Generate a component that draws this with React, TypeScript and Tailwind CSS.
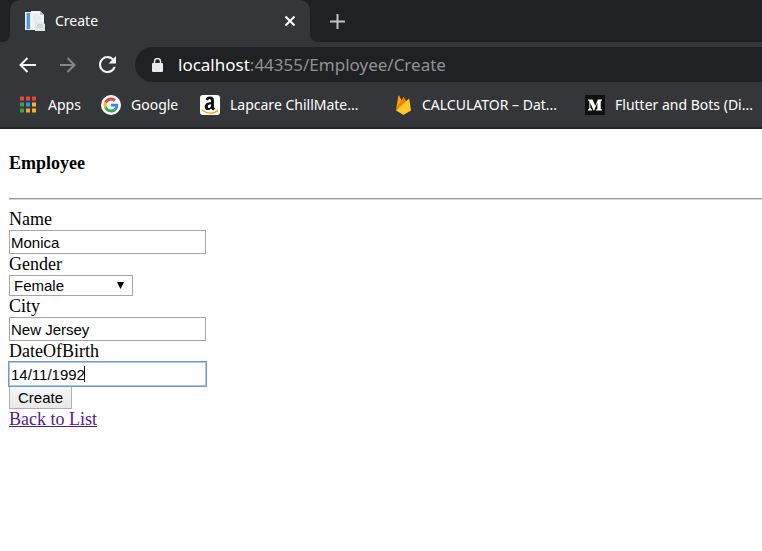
import type { ReactNode } from "react";

const UI_FONT = "font-['Segoe_UI','Noto_Sans',sans-serif]";

function PageIcon() {
  return (
    <svg width="20" height="20" viewBox="0 0 20 20" aria-hidden="true">
      <rect x="0" y="1" width="16" height="18" fill="#e6ebf0" />
      <rect x="1" y="2" width="4" height="16" fill="#4f9bcf" />
      <rect x="1" y="2" width="1" height="16" fill="#a9cfe8" />
      <path d="M6 0h9l4 4v14H6z" fill="#f2f2f2" />
      <path d="M15 0v4h4z" fill="#c4c8cc" />
      <path d="M8 4h6M8 6h8M8 8h8M8 10h5" stroke="#dfe2e5" />
      <path d="M10 11h7l3 2v7H10z" fill="#e3e5e8" />
      <path d="M12 14h6M12 16h6" stroke="#c2c6ca" />
    </svg>
  );
}

function AppsIcon() {
  const rows = [
    ["#e8453c", "#e8453c", "#e8453c"],
    ["#35a554", "#2e8ef0", "#f5b52c"],
    ["#35a554", "#f5a62c", "#f5b52c"],
  ];
  return (
    <svg width="16" height="17" viewBox="0 0 16 17" aria-hidden="true">
      {rows.map((row, y) =>
        row.map((fill, x) => <rect key={`${x}-${y}`} x={x * 6} y={y * 6 + 0.5} width="4" height="4" fill={fill} />),
      )}
    </svg>
  );
}

function GoogleIcon() {
  return (
    <svg width="20" height="20" viewBox="0 0 20 20" aria-hidden="true">
      <circle cx="10" cy="10" r="10" fill="#fff" />
      <g transform="translate(2.5 2.5) scale(.3125)">
        <path fill="#EA4335" d="M24 9.5c3.54 0 6.71 1.22 9.21 3.6l6.85-6.85C35.9 2.38 30.47 0 24 0 14.62 0 6.51 5.38 2.56 13.22l7.98 6.19C12.43 13.72 17.74 9.5 24 9.5z" />
        <path fill="#4285F4" d="M46.98 24.55c0-1.57-.15-3.09-.38-4.55H24v9.02h12.94c-.58 2.96-2.26 5.48-4.78 7.18l7.73 6c4.51-4.18 7.09-10.36 7.09-17.65z" />
        <path fill="#FBBC05" d="M10.53 28.59A14.5 14.5 0 0 1 9.77 24c0-1.6.28-3.14.76-4.59l-7.98-6.19A23.9 23.9 0 0 0 0 24c0 3.88.92 7.54 2.56 10.78l7.97-6.19z" />
        <path fill="#34A853" d="M24 48c6.48 0 11.93-2.13 15.89-5.81l-7.73-6c-2.15 1.45-4.92 2.3-8.16 2.3-6.26 0-11.57-4.22-13.47-9.91l-7.98 6.19C6.51 42.62 14.62 48 24 48z" />
      </g>
    </svg>
  );
}

function AmazonIcon() {
  return (
    <svg width="20" height="20" viewBox="0 0 20 20" aria-hidden="true">
      <rect width="20" height="20" rx="3" fill="#fff" />
      <g transform="translate(-1.8 -1.6) scale(1.18)">
        <path d="M6.3 5.2C6.7 3.3 8 2.7 9.9 2.7c2.3 0 3.4 1 3.4 3.100v4.600c0 1.200.4 1.700 1.100 2.500l-1.800 1.500c-.8-.6-1.100-1-1.500-1.600-2.200 2.300-5.600 1.600-5.600-1.300 0-3 2.700-3.800 5.400-3.900V6.300c0-1-.3-1.600-1.200-1.600-.8 0-1.100.5-1.300 1.300z" fill="#0a0a0a" />
        <path d="M10.900 9.100c-1.600.1-2.800.6-2.800 2 0 1.600 1.900 1.700 2.500.3.300-.7.300-1.400.3-2.300z" fill="#fff" />
      </g>
      <path d="M2.500 15.200c4.500 3.600 10 3.700 14.300 1.200" fill="none" stroke="#f5a623" strokeWidth="1.400" strokeLinecap="round" />
      <path d="M15.500 15c2-.5 2.800-.3 2.400.6l-.8 1.900" fill="none" stroke="#f5a623" />
    </svg>
  );
}

function FirebaseIcon() {
  return (
    <svg width="17" height="20" viewBox="0 0 17 20" aria-hidden="true">
      <path d="M1 15.500 3.300 1c.1-.5.700-.6.900-.2l2.500 4.600z" fill="#ffa000" />
      <path d="M1 15.500 8.200 2.400c.2-.4.700-.4.900 0L12 8z" fill="#f57c00" />
      <path d="m1 15.500 12.400-11.600c.3-.3.800-.1.900.3L16 15.500 9.200 19.400c-.5.300-1 .3-1.500 0z" fill="#ffca28" />
    </svg>
  );
}

function MediumIcon() {
  return (
    <svg width="20" height="20" viewBox="0 0 20 20" aria-hidden="true">
      <rect width="20" height="20" fill="#0f0f0f" />
      <path d="M3 4.500h4.500l2.800 6.200 2.600-6.200H17v.8l-1.300 1.100v7.300l1.300 1v.8h-6v-.8l1.400-1V7.400L9.200 15.500h-.7L5.300 7.700v5.300l1.600 1.700v.8H3v-.8L4.400 13V6.400L3 5.300z" fill="#fff" />
    </svg>
  );
}

function Bookmark({ icon, label, className }: { icon: ReactNode; label: string; className: string }) {
  return (
    <a href="#" className={`flex shrink-0 items-center whitespace-nowrap ${className}`}>
      {icon}
      <span>{label}</span>
    </a>
  );
}

function TabStrip() {
  return (
    <div className="flex h-[42px] bg-[#202124]">
      <div className="flex w-[10px] shrink-0 bg-[#35363a]">
        <div className="flex-1 rounded-br-lg bg-[#202124]" />
      </div>
      <div className="flex w-[300px] shrink-0 items-center gap-[10px] rounded-t-[10px] bg-[#35363a] pr-3 pl-[15px] text-white">
        <PageIcon />
        <span className="flex-1 text-sm">Create</span>
        <button aria-label="Close tab" className="flex h-4 w-4 items-center justify-center">
          <svg width="12" height="12" viewBox="0 0 12 12">
            <path d="m1.500 1.500 9 9m0-9-9 9" stroke="#fff" strokeWidth="2" />
          </svg>
        </button>
      </div>
      <div className="flex flex-1 bg-[#35363a]">
        <div className="flex flex-1 items-center rounded-bl-lg bg-[#202124] pl-5">
          <button aria-label="New tab">
            <svg width="15" height="15" viewBox="0 0 15 15">
              <path d="M7.500 0v15M0 7.500h15" stroke="#c3c4c6" strokeWidth="2" />
            </svg>
          </button>
        </div>
      </div>
    </div>
  );
}

function Toolbar() {
  return (
    <div className="flex items-center pt-[5px] pl-[19px]">
      <button aria-label="Back" className="mr-6 shrink-0">
        <svg width="17" height="16" viewBox="0 0 17 16" fill="none" stroke="#f1f3f4" strokeWidth="2">
          <path d="M17 8H2M8.500 1 1.500 8l7 7" />
        </svg>
      </button>
      <button aria-label="Forward" className="mr-[23px] shrink-0">
        <svg width="16" height="16" viewBox="0 0 16 16" fill="none" stroke="#85868a" strokeWidth="2">
          <path d="M0 8h14M7.500 1l7 7-7 7" />
        </svg>
      </button>
      <button aria-label="Reload" className="mr-[19px] shrink-0">
        <svg width="17" height="17" viewBox="4 4 16 16">
          <path
            fill="#f1f3f4"
            d="M17.650 6.350A7.960 7.960 0 0 0 12 4a8 8 0 1 0 7.730 10h-2.080A6 6 0 1 1 12 6c1.660 0 3.140.69 4.220 1.780L13 11h7V4z"
          />
        </svg>
      </button>
      <div className="flex h-[35px] min-w-0 flex-1 items-center gap-[15px] rounded-l-full bg-[#202124] pl-[17px]">
        <svg width="11" height="14" viewBox="0 0 11 14" className="shrink-0" aria-hidden="true">
          <rect y="5" width="11" height="9" rx="1" fill="#e8eaed" />
          <path d="M2.500 6V3.500a3 3 0 0 1 6 0V6" fill="none" stroke="#e8eaed" strokeWidth="1.500" />
        </svg>
        <div className="text-[17px] whitespace-nowrap text-[#909194]">
          <span className="text-white">localhost</span>:44355/Employee/Create
        </div>
      </div>
    </div>
  );
}

const fieldClass =
  "block h-6 w-[197px] border bg-white px-px font-['Liberation_Sans',Arial,sans-serif] text-[15px] text-black outline-none";

export default function App() {
  return (
    <div className="min-h-screen overflow-x-hidden bg-white">
      <header className={`border-b-2 border-[#242528] bg-[#35363a] ${UI_FONT}`}>
        <TabStrip />
        <Toolbar />
        <nav className="flex h-[45px] items-center overflow-hidden pl-5 text-sm text-white">
          <Bookmark icon={<AppsIcon />} label="Apps" className="w-[81px] gap-3" />
          <Bookmark icon={<GoogleIcon />} label="Google" className="w-[99px] gap-[10px]" />
          <Bookmark icon={<AmazonIcon />} label="Lapcare ChillMate..." className="w-[195px] gap-[10px]" />
          <Bookmark icon={<FirebaseIcon />} label="CALCULATOR – Dat..." className="w-[190px] gap-[10px]" />
          <Bookmark icon={<MediumIcon />} label="Flutter and Bots (Di..." className="gap-[10px]" />
        </nav>
      </header>

      <main className="pl-[9px] font-['Liberation_Serif','Times_New_Roman',serif] text-lg leading-[21px] text-black">
        <h4 className="py-6 font-bold">Employee</h4>
        <hr className="mb-[9px] border-t border-b border-t-[#999999] border-b-[#d6d6d6]" />
        <form onSubmit={(e) => e.preventDefault()}>
          <label htmlFor="name" className="block">Name</label>
          <input id="name" className={`${fieldClass} border-[#a6a6a6] pt-px`} defaultValue="Monica" />

          <label htmlFor="gender" className="block">Gender</label>
          <div className="relative w-[124px]">
            <select
              id="gender"
              defaultValue="Female"
              className="block h-[21px] w-full appearance-none border border-[#a6a6a6] bg-white pl-1 font-['Liberation_Sans',Arial,sans-serif] text-[15px] leading-[19px] text-black"
            >
              <option>Male</option>
              <option>Female</option>
            </select>
            <svg className="pointer-events-none absolute top-[7px] right-[9px]" width="7" height="7" viewBox="0 0 7 7" aria-hidden="true">
              <path d="M0 0h7L3.500 7z" fill="#000" />
            </svg>
          </div>

          <label htmlFor="city" className="block">City</label>
          <input id="city" className={`${fieldClass} border-[#a6a6a6] pt-px`} defaultValue="New Jersey" />

          <label htmlFor="dob" className="block">DateOfBirth</label>
          <div className="relative w-[197px]">
            <input id="dob" className={`${fieldClass} border-[#a9c4e6] ring-1 ring-[#6f9bd3]`} defaultValue="14/11/1992" />
            <span className="absolute top-1 left-[75px] h-4 w-px bg-black" />
          </div>

          <button
            type="submit"
            className="block h-[23px] w-[63px] border border-[#b0b0b0] bg-linear-to-b from-[#f7f7f7] to-[#e9e9e9] font-['Liberation_Sans',Arial,sans-serif] text-[15px] text-black"
          >
            Create
          </button>
        </form>
        <a href="#" className="text-[#551a8b] underline">Back to List</a>
      </main>
    </div>
  );
}
